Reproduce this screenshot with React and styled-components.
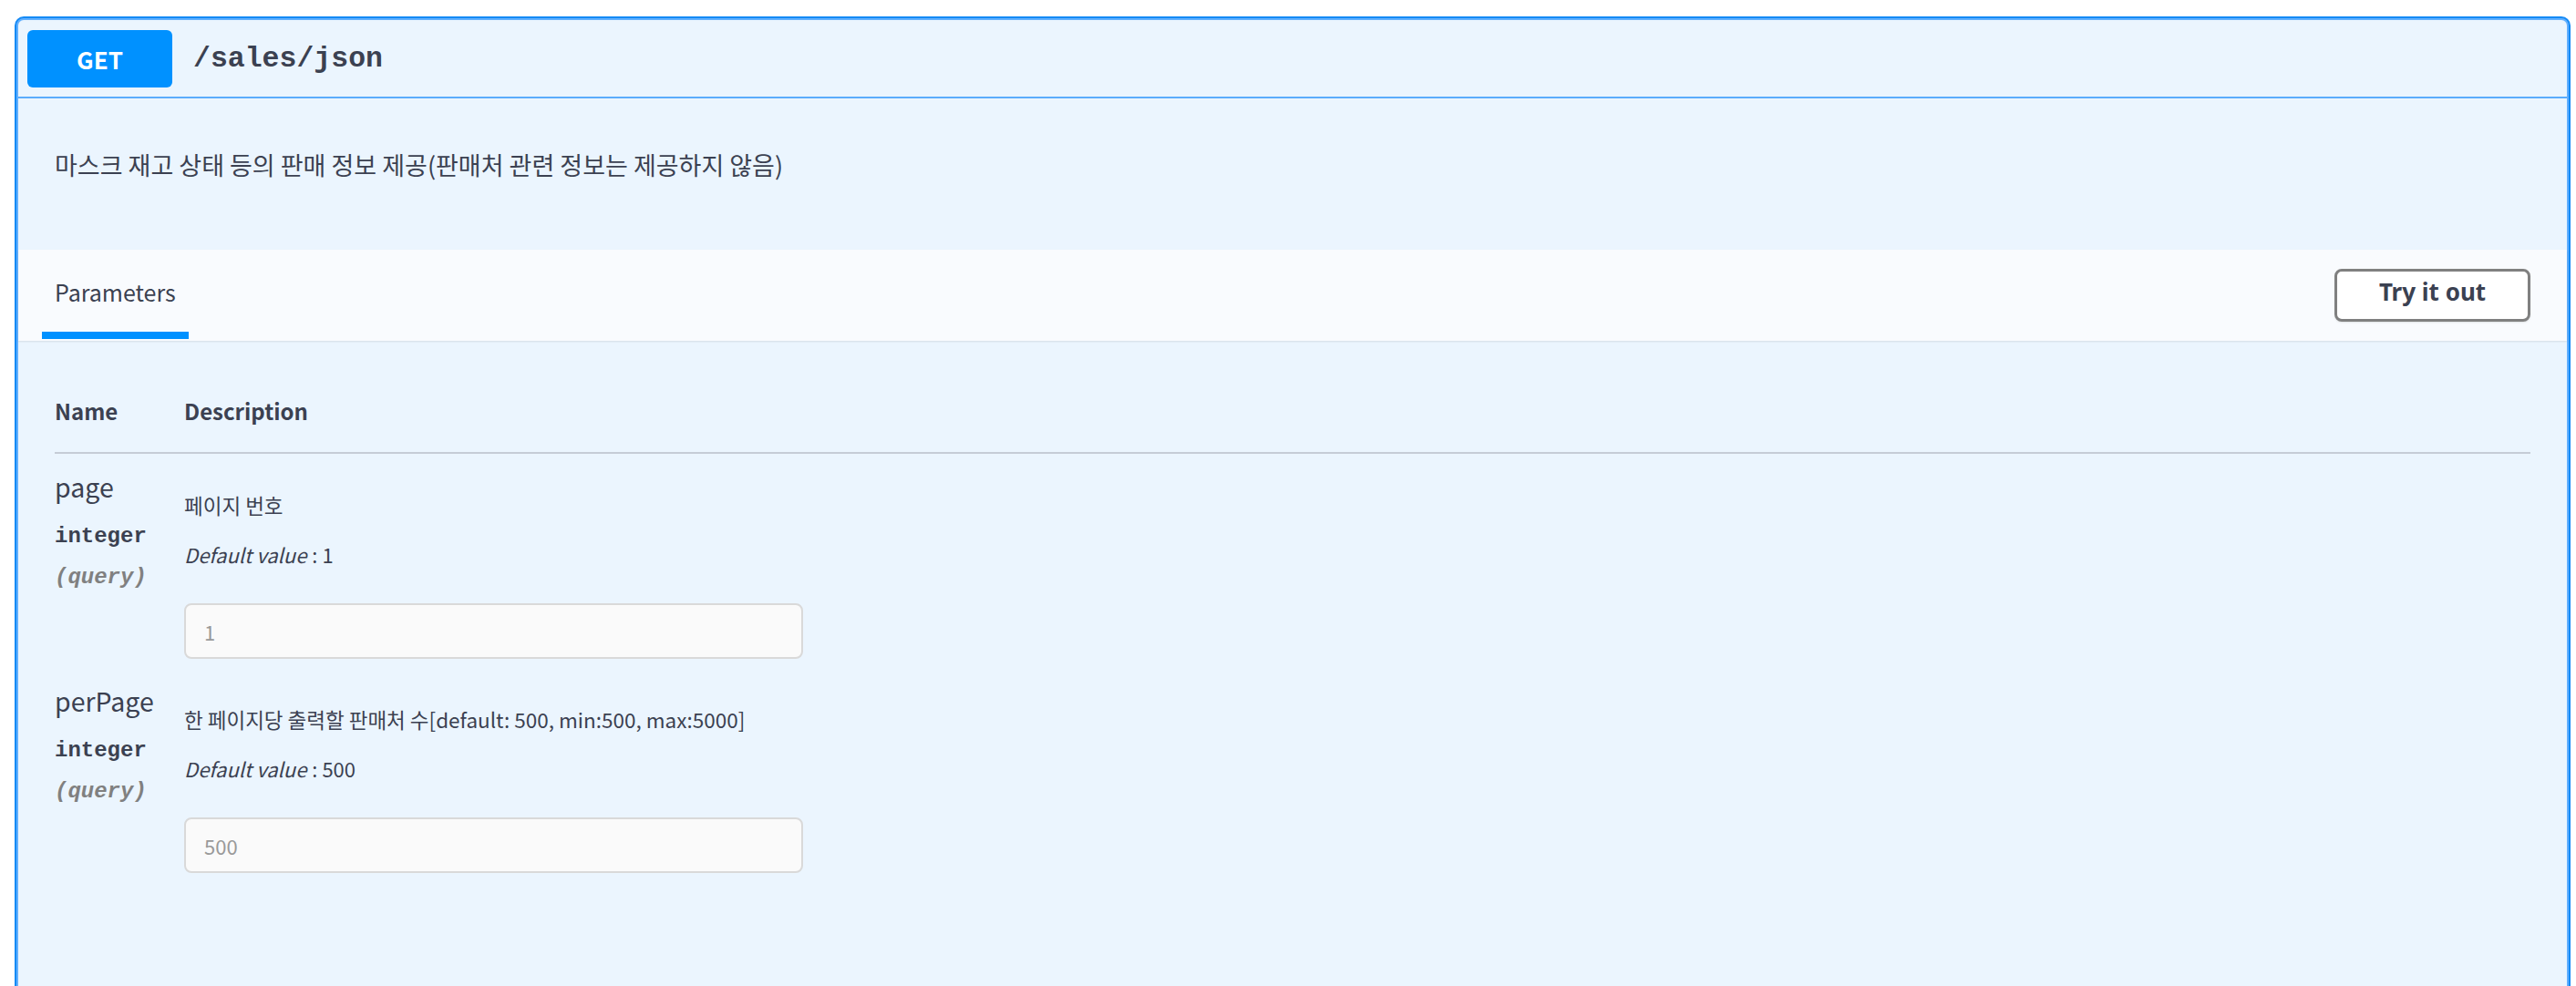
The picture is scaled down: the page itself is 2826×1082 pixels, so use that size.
import React from 'react'
import styled, { createGlobalStyle } from 'styled-components'

const GlobalStyle = createGlobalStyle`
body {
  margin: 0;
  background: #ffffff;
  font-family: "Noto Sans CJK KR", "Noto Sans", sans-serif;
  color: #3b4151;
}
`

const Page = styled.div`
padding: 20px 8px 0 18px;
`

const Opblock = styled.div`
border: 2px solid #61affe;
box-shadow: 0 0 0 2px #148af5;
border-radius: 8px 8px 0 0;
background: #ebf5fe;
`

const Summary = styled.div`
display: flex;
align-items: center;
gap: 23px;
height: 84px;
padding: 0 10px;
border-bottom: 2px solid #5aacfc;
`

const Method = styled.div`
width: 159px;
height: 63px;
border-radius: 6px;
background: #0091ff;
color: #ffffff;
font-size: 26px;
font-weight: 700;
display: flex;
align-items: center;
justify-content: center;
`

const Path = styled.span`
font-family: "Liberation Mono", monospace;
font-weight: 700;
font-size: 31.5px;
color: #3b4151;
`

const Description = styled.div`
height: 166px;
box-sizing: border-box;
padding: 54px 40px 0;
font-size: 27px;
line-height: 38px;
`

const TabHeader = styled.div`
display: flex;
align-items: flex-start;
justify-content: space-between;
height: 100px;
background: #f9fbfe;
box-shadow: 0 1px 2px rgba(0, 0, 0, 0.1);
position: relative;
`

const Tab = styled.div`
display: flex;
flex-direction: column;
height: 100%;
margin-left: 26px;
width: 161px;
box-sizing: border-box;
padding-top: 28px;
`

const TabLabel = styled.span`
padding-left: 14px;
font-size: 25px;
line-height: 36px;
`

const TabBar = styled.div`
margin-top: auto;
margin-bottom: 2px;
height: 8px;
background: #0091ff;
`

const TryButton = styled.button`
margin: 21px 40px 0 0;
width: 215px;
height: 58px;
padding: 0 0 8px;
border: 3px solid #808080;
border-radius: 8px;
background: #ffffff;
box-shadow: 0 1px 2px rgba(0, 0, 0, 0.1);
font-family: "Noto Sans", sans-serif;
font-weight: 700;
font-size: 26px;
color: #3b4151;
`

const Table = styled.div`
padding: 60px 40px 200px;
`

const HeadRow = styled.div`
display: grid;
grid-template-columns: 142px 1fr;
padding-bottom: 28px;
border-bottom: 2px solid #c5ccd6;
font-size: 24px;
font-weight: 600;
line-height: 34px;
`

const Row = styled.div`
display: grid;
grid-template-columns: 142px 1fr;
height: 235px;
box-sizing: border-box;
`

const NameCell = styled.div`
padding-top: 16px;
display: flex;
flex-direction: column;
`

const ParamName = styled.span`
font-size: 28.5px;
line-height: 40px;
`

const ParamType = styled.span`
margin-top: 20px;
font-family: "Liberation Mono", monospace;
font-weight: 700;
font-size: 24px;
line-height: 30px;
`

const ParamIn = styled.span`
margin-top: 15px;
font-family: "Liberation Mono", monospace;
font-weight: 700;
font-style: italic;
font-size: 24px;
line-height: 30px;
color: #808080;
`

const DescCell = styled.div`
padding-top: 40px;
display: flex;
flex-direction: column;
align-items: flex-start;
`

const DescText = styled.div`
font-size: 22.5px;
line-height: 32px;
`

const DefaultValue = styled.div`
margin-top: 22px;
font-size: 22px;
line-height: 32px;
i {
  margin-right: 6px;
}
`

const Input = styled.div`
margin-top: 38px;
width: 679px;
height: 61px;
box-sizing: border-box;
padding-left: 20px;
display: flex;
align-items: center;
border: 2px solid #d9d9d9;
border-radius: 8px;
background: #fafafa;
color: #999999;
font-size: 22px;
`

const params = [
  { name: 'page', desc: '페이지 번호', value: '1' },
  { name: 'perPage', desc: '한 페이지당 출력할 판매처 수[default: 500, min:500, max:5000]', value: '500' },
]

const App = () => {
  return (
    <Page>
      <GlobalStyle />
      <Opblock>
        <Summary>
          <Method>GET</Method>
          <Path>/sales/json</Path>
        </Summary>
        <Description>마스크 재고 상태 등의 판매 정보 제공(판매처 관련 정보는 제공하지 않음)</Description>
        <TabHeader>
          <Tab>
            <TabLabel>Parameters</TabLabel>
            <TabBar />
          </Tab>
          <TryButton>Try it out</TryButton>
        </TabHeader>
        <Table>
          <HeadRow>
            <span>Name</span>
            <span>Description</span>
          </HeadRow>
          {params.map(p => (
            <Row key={p.name}>
              <NameCell>
                <ParamName>{p.name}</ParamName>
                <ParamType>integer</ParamType>
                <ParamIn>(query)</ParamIn>
              </NameCell>
              <DescCell>
                <DescText>{p.desc}</DescText>
                <DefaultValue><i>Default value</i>: {p.value}</DefaultValue>
                <Input>{p.value}</Input>
              </DescCell>
            </Row>
          ))}
        </Table>
      </Opblock>
    </Page>
  )
}

export default App
